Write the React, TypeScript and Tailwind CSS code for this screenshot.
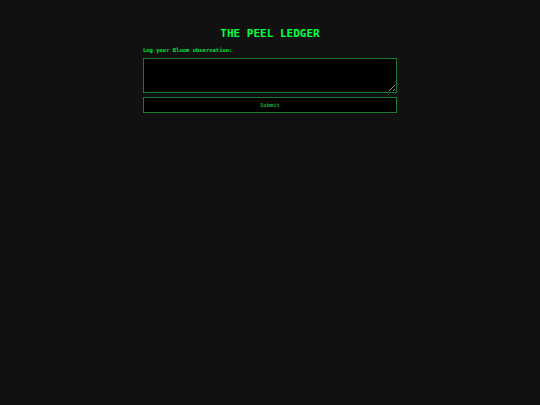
export default function App() {
  return (
    <div className="min-h-screen w-full bg-[#111111] font-['DejaVu_Sans_Mono',monospace] text-[#00ff41]">
      <div className="mx-auto flex w-[254px] flex-col pt-[26px]">
        <h1 className="text-center text-[11px] font-bold tracking-normal">THE PEEL LEDGER</h1>
        <label className="mt-[3px] text-[5.5px] font-bold text-[#00e03a]">Log your Bloom observation:</label>
        <textarea className="mt-[4px] h-[35px] w-full resize-y border border-[#1a7a33] bg-black" />
        <button className="mt-[4px] h-[16px] w-full border border-[#1a7a33] bg-black text-[5.5px] font-bold text-[#14a83a]">
          Submit
        </button>
      </div>
    </div>
  );
}
